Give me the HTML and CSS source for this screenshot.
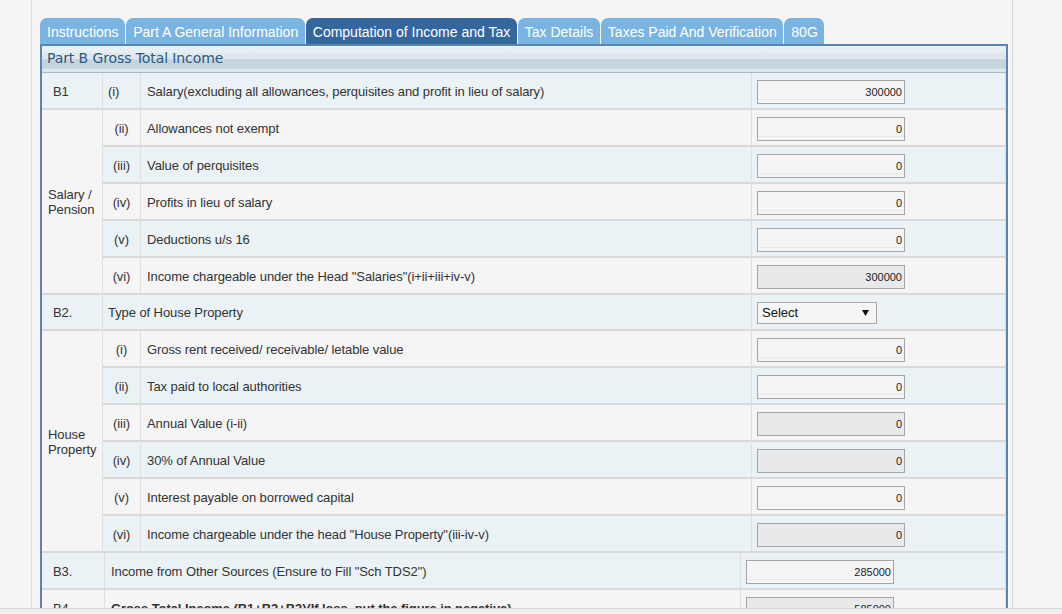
FILE: index.html
```html
<!DOCTYPE html>
<html>
<head>
<meta charset="utf-8">
<title>Computation of Income and Tax</title>
<link rel="stylesheet" href="styles.css">
</head>
<body>
<div class="page">
  <ul class="tabs">
    <li class="tab">Instructions</li>
    <li class="tab">Part A General Information</li>
    <li class="tab active">Computation of Income and Tax</li>
    <li class="tab">Tax Details</li>
    <li class="tab">Taxes Paid And Verification</li>
    <li class="tab">80G</li>
  </ul>
  <div class="panel">
    <div class="panel-head">Part B Gross Total Income</div>
    <table class="grid">
      <colgroup><col class="t1c1"><col class="t1c2"><col class="t1c3"><col class="t1c4"></colgroup>
      <tr class="b">
        <td class="code">B1</td>
        <td class="num first">(i)</td>
        <td class="desc">Salary(excluding all allowances, perquisites and profit in lieu of salary)</td>
        <td class="val"><input class="field" type="text" value="300000"></td>
      </tr>
      <tr class="g">
        <td class="group" rowspan="5">Salary /<br>Pension</td>
        <td class="num">(ii)</td>
        <td class="desc">Allowances not exempt</td>
        <td class="val"><input class="field" type="text" value="0"></td>
      </tr>
      <tr class="b">
        <td class="num">(iii)</td>
        <td class="desc">Value of perquisites</td>
        <td class="val"><input class="field" type="text" value="0"></td>
      </tr>
      <tr class="g">
        <td class="num">(iv)</td>
        <td class="desc">Profits in lieu of salary</td>
        <td class="val"><input class="field" type="text" value="0"></td>
      </tr>
      <tr class="b">
        <td class="num">(v)</td>
        <td class="desc">Deductions u/s 16</td>
        <td class="val"><input class="field" type="text" value="0"></td>
      </tr>
      <tr class="g">
        <td class="num">(vi)</td>
        <td class="desc">Income chargeable under the Head "Salaries"(i+ii+iii+iv-v)</td>
        <td class="val"><input class="field ro" type="text" value="300000" readonly></td>
      </tr>
      <tr class="b short">
        <td class="code">B2.</td>
        <td class="desc wide" colspan="2">Type of House Property</td>
        <td class="val">
          <div class="select"><span>Select</span><svg class="caret" width="7" height="6" viewBox="0 0 7 6"><path d="M0 0H7L3.5 6Z" fill="#111"/></svg></div>
        </td>
      </tr>
      <tr class="g">
        <td class="group" rowspan="6">House<br>Property</td>
        <td class="num">(i)</td>
        <td class="desc">Gross rent received/ receivable/ letable value</td>
        <td class="val"><input class="field" type="text" value="0"></td>
      </tr>
      <tr class="b">
        <td class="num">(ii)</td>
        <td class="desc">Tax paid to local authorities</td>
        <td class="val"><input class="field" type="text" value="0"></td>
      </tr>
      <tr class="g">
        <td class="num">(iii)</td>
        <td class="desc">Annual Value (i-ii)</td>
        <td class="val"><input class="field ro" type="text" value="0" readonly></td>
      </tr>
      <tr class="b">
        <td class="num">(iv)</td>
        <td class="desc">30% of Annual Value</td>
        <td class="val"><input class="field ro" type="text" value="0" readonly></td>
      </tr>
      <tr class="g">
        <td class="num">(v)</td>
        <td class="desc">Interest payable on borrowed capital</td>
        <td class="val"><input class="field" type="text" value="0"></td>
      </tr>
      <tr class="b">
        <td class="num">(vi)</td>
        <td class="desc">Income chargeable under the head "House Property"(iii-iv-v)</td>
        <td class="val"><input class="field ro" type="text" value="0" readonly></td>
      </tr>
    </table>
    <table class="grid">
      <colgroup><col class="t2c1"><col class="t2c2"><col class="t2c3"></colgroup>
      <tr class="b">
        <td class="code">B3.</td>
        <td class="desc wide">Income from Other Sources (Ensure to Fill "Sch TDS2")</td>
        <td class="val"><input class="field" type="text" value="285000"></td>
      </tr>
      <tr class="g">
        <td class="code">B4.</td>
        <td class="desc wide strong">Gross Total Income (B1+B2+B3)(If loss, put the figure in negative)</td>
        <td class="val"><input class="field ro" type="text" value="585000" readonly></td>
      </tr>
    </table>
  </div>
</div>
<div class="hbar"></div>
</body>
</html>
```

FILE: styles.css
```css
html, body {
  margin: 0;
  padding: 0;
  height: 100%;
  overflow: hidden;
}
body {
  background: #f5f5f5;
  font-family: "Liberation Sans", Arial, sans-serif;
  color: #333;
}
.page {
  margin-left: 31px;
  width: 968px;
  min-height: 100vh;
  padding: 18px 4px 0 8px;
  border-left: 1px solid #dcdcdc;
  border-right: 1px solid #cfdad5;
}
.tabs {
  list-style: none;
  margin: 0;
  padding: 0;
  display: flex;
  gap: 1px;
}
.tab {
  height: 26px;
  line-height: 28px;
  padding: 0 6.6px 0 7px;
  font-size: 14px;
  color: #fff;
  background: #7ab4e2;
  border-radius: 7px 7px 0 0;
  white-space: nowrap;
}
.tab.active {
  background: #35679d;
}
.panel {
  border: 2px solid #5a85b3;
  border-bottom: none;
  background: #f5f5f5;
}
.panel-head {
  height: 26px;
  line-height: 25px;
  padding-left: 5px;
  font-family: "DejaVu Sans", sans-serif;
  font-size: 14px;
  letter-spacing: -0.1px;
  color: #2b5883;
  border-bottom: 1px solid #a9bac6;
  background: linear-gradient(#e9f0f4 0, #e6eef2 26%, #dde7ed 28%, #dde7ed 50%, #c5d5de 52%, #c5d5de 86%, #d9e8ef 88%, #d9e8ef 100%);
}
.grid {
  width: 100%;
  table-layout: fixed;
  border-collapse: separate;
  border-spacing: 0;
  font-size: 13px;
  letter-spacing: -0.08px;
}
.t1c1 { width: 61px; }
.t1c2 { width: 38px; }
.t1c3 { width: 611px; }
.t2c1 { width: 63px; }
.t2c2 { width: 636px; }
.grid td {
  height: 34px;
  padding: 1px 0 0 0;
  border-right: 1px solid #dfdfdf;
  border-bottom: 2px solid #d9d9d9;
  vertical-align: middle;
  box-sizing: content-box;
}
.grid td.val { padding-top: 0; height: 35px; }
.grid tr.short td { height: 33px; }
.grid tr.short td.val { height: 34px; }
.grid tr.b td { background: #ebf2f6; }
.grid tr.g td { background: #f5f5f5; }
.grid tr td.group {
  background: #f5f5f5;
  padding-left: 6px;
  line-height: 15px;
}
.code { padding-left: 11px !important; }
.num { text-align: center; }
.num.first { text-align: left; padding-left: 5px !important; }
.desc { padding-left: 6px !important; white-space: nowrap; overflow: hidden; }
.desc.wide { padding-left: 5px !important; }
.grid:last-child .desc.wide { padding-left: 6px !important; }
.strong { font-weight: bold; }
.val { padding-left: 5px !important; }
.field {
  display: block;
  box-sizing: border-box;
  width: 148px;
  height: 24px;
  margin: 2px 0 0 0;
  padding: 0 2px;
  border: 1px solid #a5a5a5;
  border-radius: 0;
  background: linear-gradient(#f5f5f5 0, #f5f5f5 calc(100% - 4px), #e9e9e9 calc(100% - 4px), #e9e9e9 calc(100% - 3px), #f5f5f5 calc(100% - 3px));
  font-family: "Liberation Sans", Arial, sans-serif;
  font-size: 11px;
  color: #222;
  text-align: right;
  outline: none;
}
.field.ro {
  background: #e8e9ea;
}
.select {
  box-sizing: border-box;
  width: 120px;
  height: 22px;
  margin-top: 1px;
  border: 1px solid #a6a6a6;
  background: #f5f5f5;
  display: flex;
  align-items: center;
  justify-content: space-between;
  padding: 0 7px 0 4px;
  font-size: 13px;
  letter-spacing: 0;
  color: #111;
}
.caret { display: block; }
.hbar {
  position: fixed;
  left: 0;
  right: 0;
  bottom: 0;
  height: 5px;
  background: #f0f0f0;
  border-top: 1px solid #d6d6d6;
}
```
